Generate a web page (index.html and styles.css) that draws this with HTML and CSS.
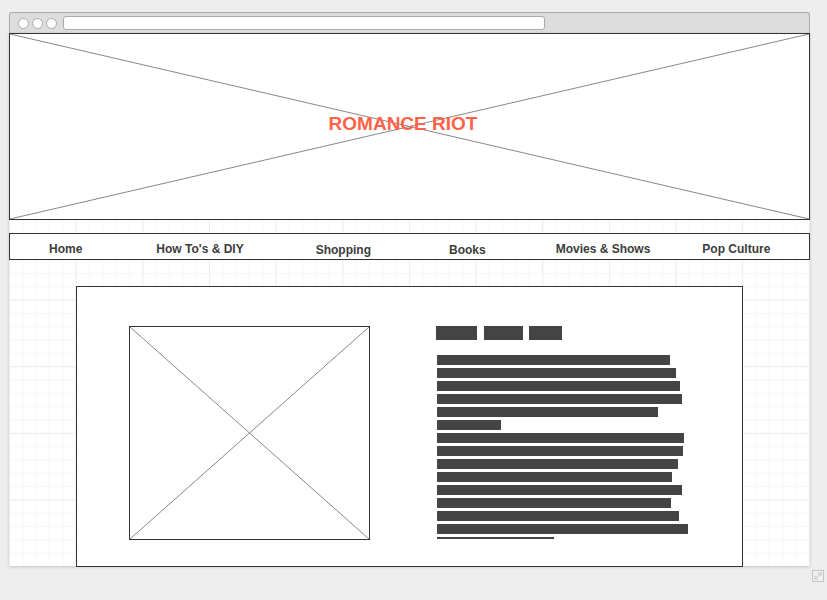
FILE: index.html
```html
<!DOCTYPE html>
<html lang="en">
<head>
  <meta charset="UTF-8">
  <title>Romance Riot</title>
  <link rel="stylesheet" href="styles.css">
</head>
<body>
  <div class="window">
    <div class="titlebar">
      <span class="dot"></span><span class="dot"></span><span class="dot"></span>
      <div class="address"></div>
    </div>

    <div class="viewport">
      <div class="banner">
        <svg class="cross" viewBox="0 0 100 100" preserveAspectRatio="none">
          <line x1="0" y1="0" x2="100" y2="100" />
          <line x1="100" y1="0" x2="0" y2="100" />
        </svg>
        <h1 class="logo">ROMANCE RIOT</h1>
      </div>

      <nav class="menu">
        <a class="m-home">Home</a>
        <a class="m-how">How To's &amp; DIY</a>
        <a class="m-shop low">Shopping</a>
        <a class="m-books low">Books</a>
        <a class="m-movies mid">Movies &amp; Shows</a>
        <a class="m-pop mid">Pop Culture</a>
      </nav>

      <div class="card">
        <div class="picture">
          <svg class="cross" viewBox="0 0 100 100" preserveAspectRatio="none">
            <line x1="0" y1="0" x2="100" y2="100" />
            <line x1="100" y1="0" x2="0" y2="100" />
          </svg>
        </div>
        <div class="post">
          <div class="tags">
            <span style="width:41px"></span>
            <span style="width:39px"></span>
            <span style="width:33px"></span>
          </div>
          <div class="lines">
            <div class="bar" style="width:233px"></div>
            <div class="bar" style="width:239px"></div>
            <div class="bar" style="width:243px"></div>
            <div class="bar" style="width:245px"></div>
            <div class="bar" style="width:221px"></div>
            <div class="bar" style="width:64px"></div>
            <div class="bar" style="width:247px"></div>
            <div class="bar" style="width:246px"></div>
            <div class="bar" style="width:241px"></div>
            <div class="bar" style="width:235px"></div>
            <div class="bar" style="width:245px"></div>
            <div class="bar" style="width:234px"></div>
            <div class="bar" style="width:242px"></div>
            <div class="bar" style="width:251px"></div>
            <div class="bar" style="width:117px"></div>
          </div>
        </div>
      </div>
    </div>
  </div>

  <svg class="resize" width="12" height="12" viewBox="0 0 12 12">
    <rect x="0.5" y="0.5" width="11" height="11" fill="none" stroke="#c4c4c4" />
    <line x1="3" y1="9" x2="9" y2="3" stroke="#c4c4c4" />
    <polyline points="6,3 9,3 9,6" fill="none" stroke="#c4c4c4" />
    <polyline points="3,6 3,9 6,9" fill="none" stroke="#c4c4c4" />
  </svg>
</body>
</html>
```

FILE: styles.css
```css
body { margin: 0; background: #eeeeee; font-family: "Liberation Sans", Arial, sans-serif; position: relative; height: 600px; }

.window { margin: 12px 0 0 9px; width: 801px; }
.titlebar { height: 21px; background: #dddddd; border: 1px solid #aaaaaa; border-bottom: none; border-radius: 3px 3px 0 0; display: flex; align-items: center; padding-left: 8px; box-sizing: border-box; }
.dot { width: 9px; height: 9px; border: 1px solid #aaaaaa; border-radius: 50%; background: #fff; margin-right: 3px; }
.address { width: 480px; height: 12px; margin-left: 3px; background: #fff; border: 1px solid #aaaaaa; border-radius: 3px; }

.viewport {
  height: 533px;
  background-color: #fff;
  background-image:
    linear-gradient(to right, #ededed 1px, transparent 1px),
    linear-gradient(to bottom, #ededed 1px, transparent 1px),
    linear-gradient(to right, #f5f5f5 1px, transparent 1px),
    linear-gradient(to bottom, #f5f5f5 1px, transparent 1px);
  background-size: 66.667px 66.667px, 66.667px 66.667px, 13.333px 13.333px, 13.333px 13.333px;
  box-shadow: 0 1px 3px rgba(0,0,0,0.18);
}

.cross { position: absolute; left: 0; top: 0; width: 100%; height: 100%; }
.cross line { stroke: #888; stroke-width: 1; vector-effect: non-scaling-stroke; }

.banner { position: relative; height: 185px; border: 1px solid #333; background: #fff; display: flex; align-items: center; justify-content: center; padding-right: 13px; }
.logo { position: relative; margin: 0 0 5px 0; font-size: 19px; font-weight: bold; color: #ff6347; }

.menu { margin-top: 13px; height: 25px; border: 1px solid #333; background: #fff; display: flex; align-items: center; }
.menu a { font-size: 12px; font-weight: bold; color: #3c3c3c; padding-top: 4px; }
.menu a.low { padding-top: 6px; }
.menu a.mid { padding-top: 5px; }
.m-home { margin-left: 39px; }
.m-how { margin-left: 74px; }
.m-shop { margin-left: 72px; }
.m-books { margin-left: 78px; }
.m-movies { margin-left: 70px; }
.m-pop { margin-left: 52px; }

.card { margin: 26px 0 0 67px; width: 613px; height: 240px; border: 1px solid #333; background: #fff; display: flex; padding: 39px 0 0 52px; }
.picture { position: relative; width: 239px; height: 212px; border: 1px solid #333; flex: none; }
.post { margin-left: 66px; }
.tags { display: flex; gap: 7px; }
.tags span { height: 14px; background: #444; }
.tags span + span + span { margin-left: -1px; }
.lines { margin: 15px 0 0 1px; height: 184px; overflow: hidden; display: flex; flex-direction: column; gap: 3px; }
.bar { height: 10px; background: #444; flex: none; }

.resize { position: absolute; left: 812px; top: 570px; }
```
